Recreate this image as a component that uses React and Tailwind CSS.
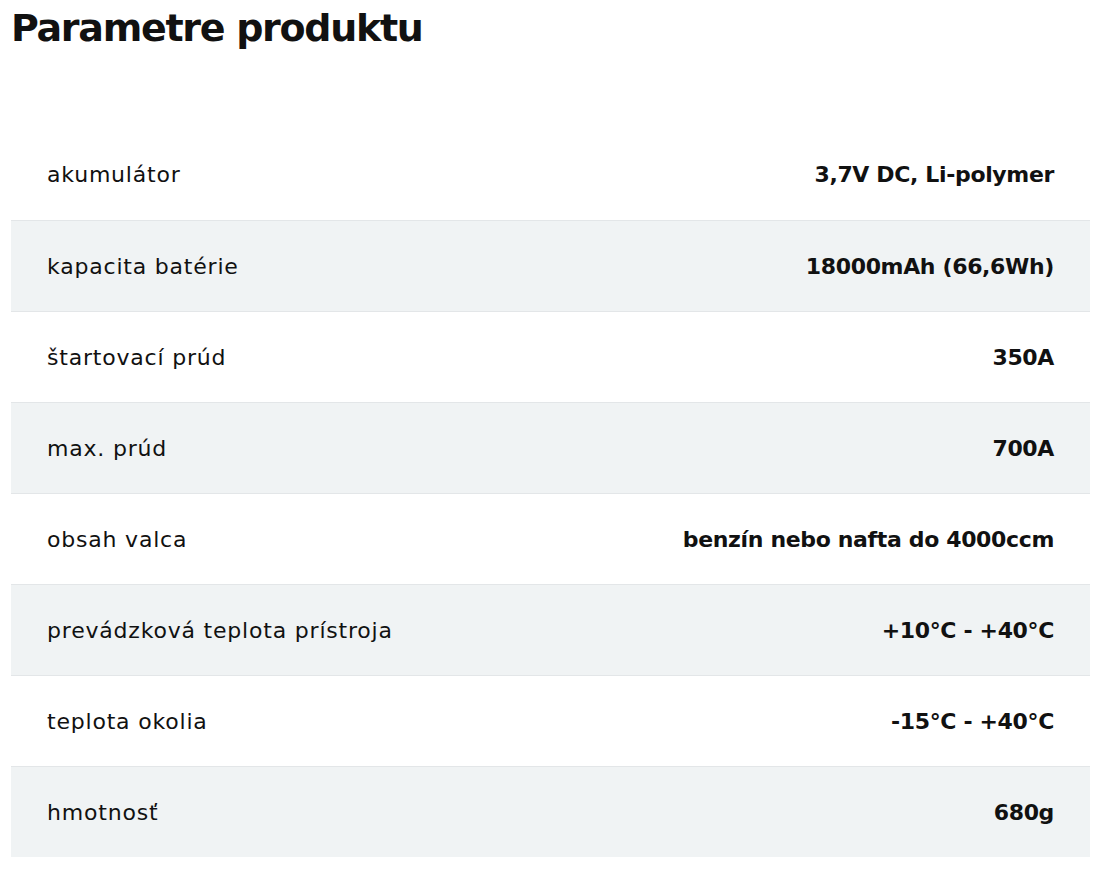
const rows = [
  ["akumulátor", "3,7V DC, Li-polymer"],
  ["kapacita batérie", "18000mAh (66,6Wh)"],
  ["štartovací prúd", "350A"],
  ["max. prúd", "700A"],
  ["obsah valca", "benzín nebo nafta do 4000ccm"],
  ["prevádzková teplota prístroja", "+10°C - +40°C"],
  ["teplota okolia", "-15°C - +40°C"],
  ["hmotnosť", "680g"],
];

export default function App() {
  return (
    <div className="bg-white min-h-[872px] px-[11px] text-[#111] font-['DejaVu_Sans',sans-serif]">
      <h1 className="text-[38px] font-bold leading-[56px] tracking-[-1.3px]">Parametre produktu</h1>
      <div className="mt-[73px] w-[1079px]">
        {rows.map(([label, value], i) => (
          <div
            key={label}
            className={
              "flex items-center justify-between h-[91px] px-9 text-[22px] " +
              (i > 0 ? "border-t border-[#e3e6e8] " : "") +
              (i % 2 === 1 ? "bg-[#f0f3f4]" : "")
            }
          >
            <span className="tracking-[0.8px]">{label}</span>
            <span className="font-bold tracking-[-0.35px]">{value}</span>
          </div>
        ))}
      </div>
    </div>
  );
}
